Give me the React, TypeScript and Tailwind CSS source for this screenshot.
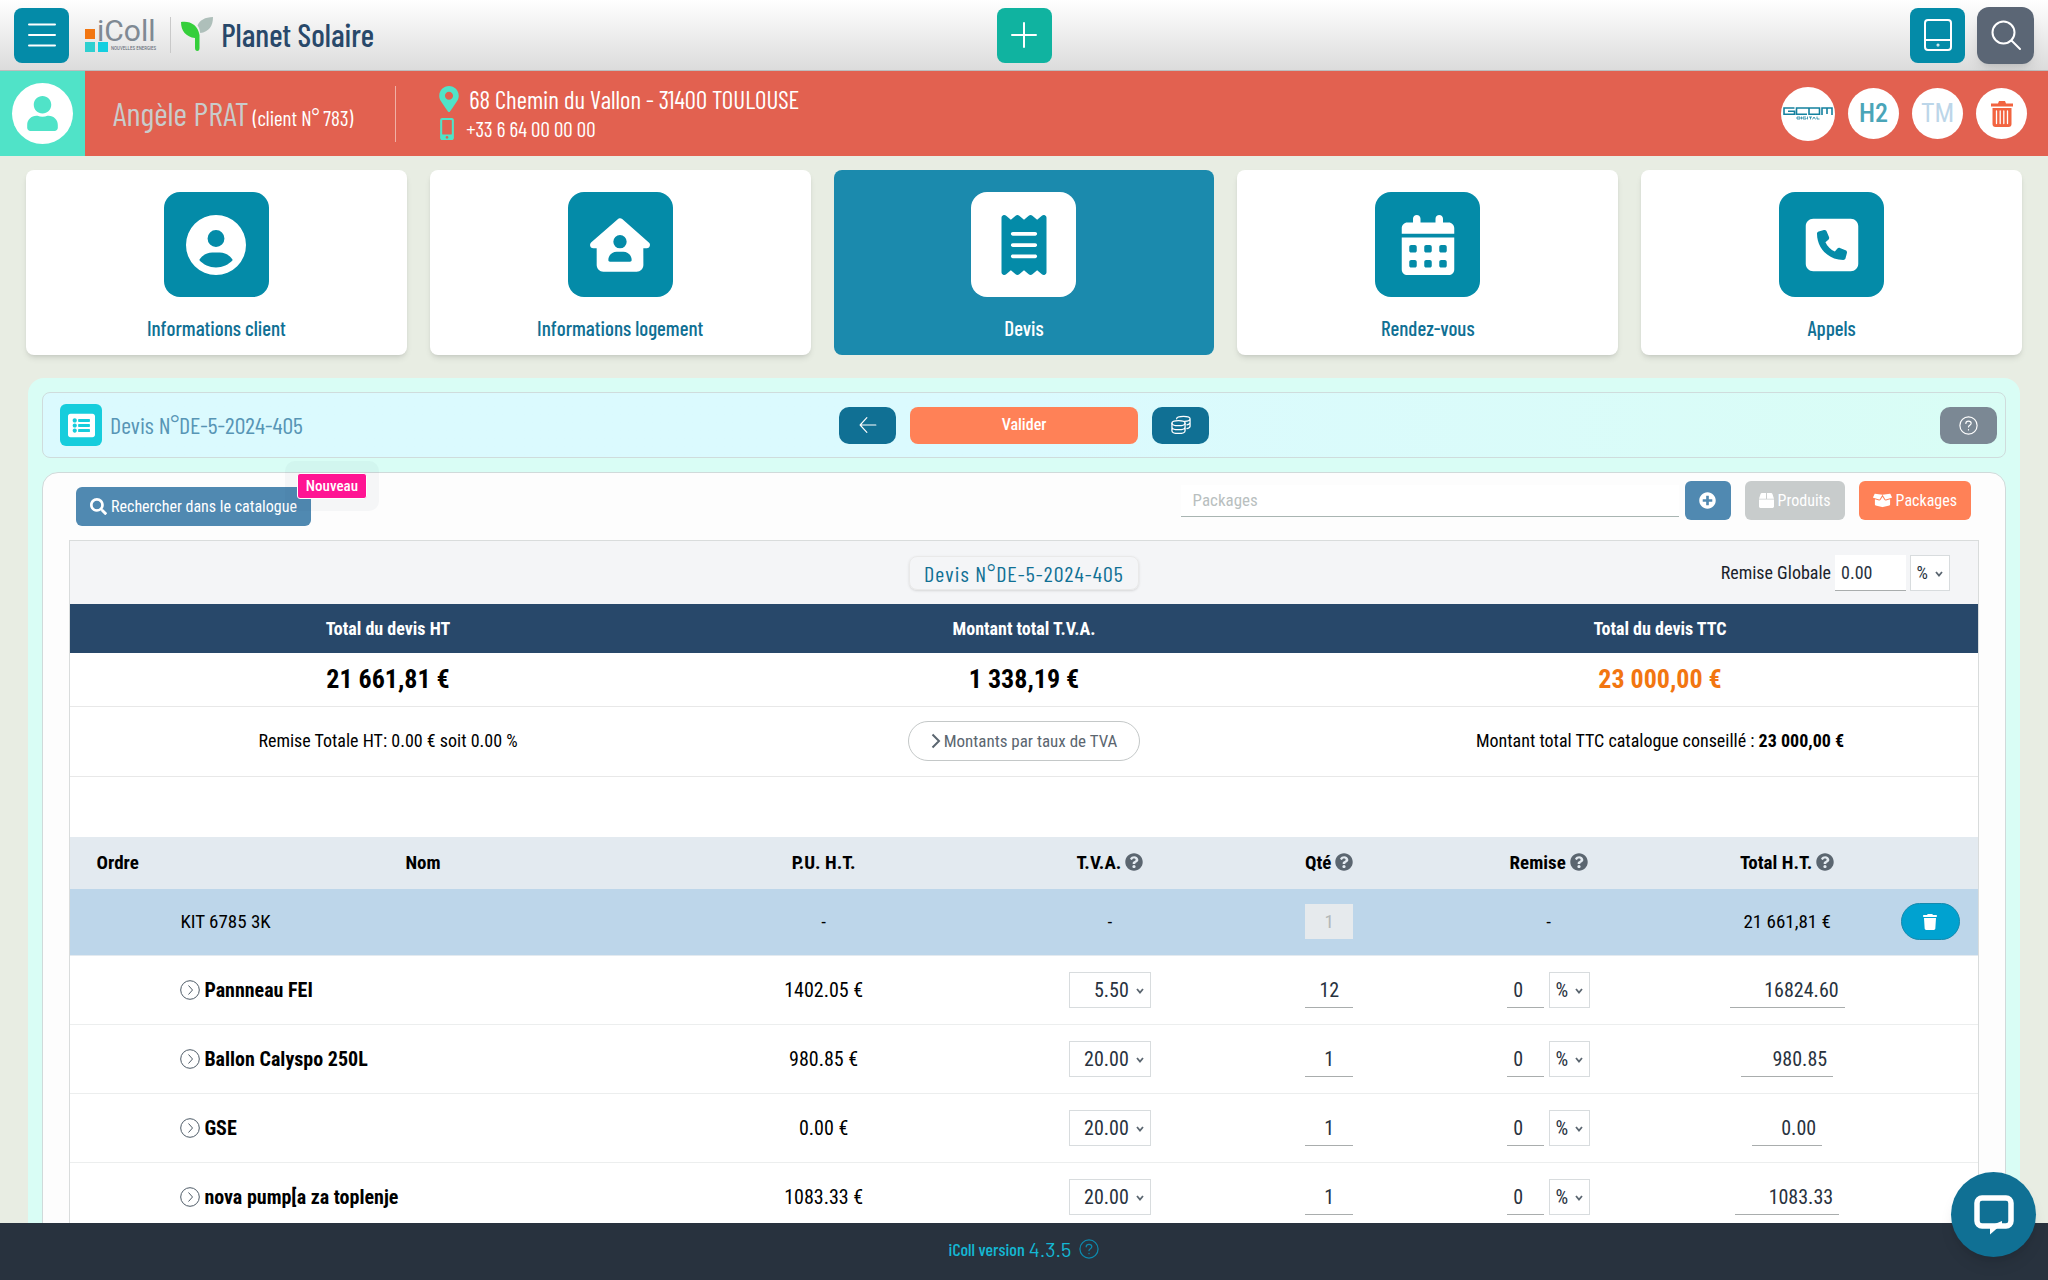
import type React from "react"

import {
  FaBox,
  FaBoxOpen,
  FaListAlt,
  FaMapMarkerAlt,
  FaMobileAlt,
  FaPlusCircle,
  FaQuestionCircle,
  FaSearch,
  FaUser,
} from "react-icons/fa"
import {
  FaCalendarDays,
  FaCircleUser,
  FaHouseUser,
  FaReceipt,
  FaSquarePhone,
  FaTrash,
} from "react-icons/fa6"

const tabs = [
  { name: "Informations client", icon: FaCircleUser, active: false },
  { name: "Informations logement", icon: FaHouseUser, active: false },
  { name: "Devis", icon: FaReceipt, active: true },
  { name: "Rendez-vous", icon: FaCalendarDays, active: false },
  { name: "Appels", icon: FaSquarePhone, active: false },
]

const lines = [
  { name: "Pannneau FEI", price: "1402.05 €", tva: "5.50", qty: "12", discount: "0", total: "16824.60", width: "w-[115px]" },
  { name: "Ballon Calyspo 250L", price: "980.85 €", tva: "20.00", qty: "1", discount: "0", total: "980.85", width: "w-[92px]" },
  { name: "GSE", price: "0.00 €", tva: "20.00", qty: "1", discount: "0", total: "0.00", width: "w-[70px]" },
  { name: "nova pump[a za toplenje", price: "1083.33 €", tva: "20.00", qty: "1", discount: "0", total: "1083.33", width: "w-[104px]" },
]

const columns = [
  { name: "Ordre", width: "w-[5%]", help: false },
  { name: "Nom", width: "w-[27%]", help: false },
  { name: "P.U. H.T.", width: "w-[15%]", help: false },
  { name: "T.V.A.", width: "w-[15%]", help: true },
  { name: "Qté", width: "w-[8%]", help: true },
  { name: "Remise", width: "w-[15%]", help: true },
  { name: "Total H.T.", width: "w-[10%]", help: true },
  { name: "", width: "w-[5%]", help: false },
]

function LineIcon({ className, children }: { className: string; children: React.ReactNode }) {
  return (
    <svg
      viewBox="0 0 32 32"
      fill="none"
      stroke="currentColor"
      strokeWidth="2"
      strokeLinecap="round"
      strokeLinejoin="round"
      className={className}
      aria-hidden="true"
    >
      {children}
    </svg>
  )
}

function CoinsIcon() {
  return (
    <LineIcon className="size-5">
      <ellipse cx="12" cy="13" rx="10.5" ry="4" />
      <path d="M1.5 13v12c0 2.5 4.5 4.5 10.5 4.5s10.5-2 10.5-4.5V13M1.5 19c0 2.5 4.5 4.5 10.5 4.5s10.5-2 10.5-4.5" />
      <path d="M9 6c0-2.5 5-4 11-4s10.5 1.6 10.5 4-4.5 4-9 4M30.5 6v12c0 1.8-2 3-5 3.700M30.5 12c0 1.8-2 3-5 3.700" />
    </LineIcon>
  )
}

function QuestionIcon({ className }: { className: string }) {
  return (
    <LineIcon className={className}>
      <circle cx="16" cy="16" r="14.5" />
      <path d="M11.5 12.5c0-2.5 1.8-4 4.5-4s4.5 1.6 4.5 3.8c0 3.2-4.5 3.2-4.5 6.200M16 23v.4" />
    </LineIcon>
  )
}

// Select with its own small chevron
function Dropdown({
  label,
  value,
  options,
  className,
}: {
  label: string
  value: string
  options: string[]
  className: string
}) {
  return (
    <span className="relative inline-flex align-middle">
      <select
        aria-label={label}
        defaultValue={value}
        className={`h-9 appearance-none border border-[#d8dcde] bg-white pr-[21px] leading-6 text-[#28323e] [text-align-last:right] ${className}`}
      >
        {options.map((option) => (
          <option key={option}>{option}</option>
        ))}
      </select>
      <svg viewBox="0 0 8 6" className="pointer-events-none absolute right-[7px] top-[16px] h-[6px] w-2" aria-hidden="true">
        <path d="M1 1l3 3.500L7 1" fill="none" stroke="#5b6670" strokeWidth="1.800" />
      </svg>
    </span>
  )
}

function Logo() {
  return (
    <a href="#" className="flex items-center gap-[14px]">
      <span className="flex items-end" aria-label="iColl Nouvelles Energies">
        <span className="grid grid-cols-2 gap-[3px]">
          <span className="size-[10px] bg-[#f27611]" />
          <span className="size-[10px]" />
          <span className="size-[10px] bg-[#2fd0d0]" />
          <span className="size-[10px] bg-[#14cfe0]" />
        </span>
        <span className="-ml-[11px] flex flex-col">
          <span className="font-['Roboto','Liberation_Sans',sans-serif] text-[30px] leading-[26px] text-[#7f8993]">iColl</span>
          <span className="pl-[14px] text-[5px] leading-[8px] text-[#5b6670]">NOUVELLES ENERGIES</span>
        </span>
      </span>
      <span className="h-9 w-px bg-[#c9c9c9]" />
      <span className="-ml-1 flex items-center gap-2 pb-[2px]">
        <svg viewBox="0 0 32 34" className="h-[34px] w-8" aria-hidden="true">
          <path fill="#35cf3b" d="M0 5C9 3.500 17 8 18.500 18v13q0 3-2.200 3t-2.300-3V21C5 20 0 14 0 5z" />
          <path fill="#aebfba" d="M32 0C24 0 18.500 3.500 16.500 8.500c1.500 2 2.300 4 2.700 7.500C28 15 32 9 32 0z" />
        </svg>
        <span className="font-['Barlow_Condensed','Roboto_Condensed',sans-serif] text-[32px] font-medium leading-9 text-[#28486a]">
          Planet Solaire
        </span>
      </span>
    </a>
  )
}

function Header() {
  return (
    <header className="grid h-[71px] shrink-0 grid-cols-[1fr_auto_1fr] items-center border-b border-[#bdbdbd] bg-gradient-to-b from-white to-[#dcdcdc] px-[14px]">
      <div className="flex items-center gap-4">
        <button type="button" aria-label="Menu" className="flex size-[55px] items-center justify-center rounded-lg bg-[#048ba8] text-white">
          <LineIcon className="size-8">
            <path d="M3 5.5h26M3 16h26M3 26.5h26" />
          </LineIcon>
        </button>
        <Logo />
      </div>
      <button type="button" aria-label="Ajouter" className="flex size-[55px] items-center justify-center rounded-lg bg-[#10b3a0] text-white">
        <LineIcon className="size-8">
          <path d="M16 4v24M4 16h24" />
        </LineIcon>
      </button>
      <div className="flex items-center justify-end gap-3">
        <button type="button" aria-label="Tablette" className="flex size-[55px] items-center justify-center rounded-lg bg-[#048ba8] text-white">
          <LineIcon className="size-8">
            <rect x="3" y="1" width="26" height="30" rx="3" />
            <path d="M3 21h26" />
            <circle cx="16" cy="26" r="0.5" />
          </LineIcon>
        </button>
        <button
          type="button"
          aria-label="Rechercher"
          className="flex size-[57px] items-center justify-center rounded-xl bg-[#5b6675] text-white shadow-lg"
        >
          <LineIcon className="size-8">
            <circle cx="13.5" cy="13.5" r="11" />
            <path d="M21.5 21.5L30 30" />
          </LineIcon>
        </button>
      </div>
    </header>
  )
}

function ClientBar() {
  return (
    <section className="flex h-[85px] shrink-0 items-center bg-[#e26150] font-['Barlow_Condensed','Roboto_Condensed',sans-serif] text-white">
      <div className="flex size-[85px] items-center justify-center bg-[#50e3c8]">
        <span className="flex size-[61px] items-center justify-center rounded-full bg-white">
          <FaUser className="size-[35px] text-[#50e3c8]" />
        </span>
      </div>
      <h1 className="flex items-baseline gap-1 pl-7 pt-1 text-[#c9cccb]">
        <span className="text-[33px] leading-10">Angèle PRAT</span>
        <span className="text-[21px] leading-10 text-white">(client N° 783)</span>
      </h1>
      <span className="ml-[42px] h-14 w-px bg-[#f0b0a5]" />
      <address className="flex flex-col pb-[2px] pl-[43px] not-italic">
        <span className="flex items-center gap-[10px] text-[25px] leading-8">
          <FaMapMarkerAlt className="h-[26px] w-5 text-[#50e3c8]" />
          68 Chemin du Vallon - 31400 TOULOUSE
        </span>
        <span className="flex items-center gap-[11px] text-[21px] leading-7">
          <FaMobileAlt className="h-[22px] w-4 text-[#50e3c8]" />
          +33 6 64 00 00 00
        </span>
      </address>
      <div className="ml-auto flex items-center gap-[13px] pr-[21px] font-['Roboto_Condensed','Liberation_Sans',sans-serif]">
        <span className="flex size-[54px] flex-col items-center justify-center rounded-full bg-white text-[#14819f]">
          <svg viewBox="0 0 50 13" className="h-[13px] w-[50px]" fill="none" stroke="currentColor" role="img" aria-label="GCOM Digital">
            <path strokeWidth="1.600" d="M11.500 1H1v6.200h10.500V4.200H5M24 1H13.500v6.200H24M26 1v6.200h10.500V1zM13.500 1H36M39 8V1h10v7M44 1v6" />
            <path strokeWidth="0.800" d="M14 10h3v2h-3zM18.500 9.600v2.800M23 10h-3v2h3v-1M24.500 9.600v2.800M26 10h3M27.500 10v2.400M29.500 12.400L31 10l1.500 2.400M34 9.600V12h2.500" />
          </svg>
        </span>
        <button type="button" className="size-[51px] rounded-full bg-white text-[26px] font-medium text-[#4aa5b8]">
          H2
        </button>
        <button type="button" className="size-[51px] rounded-full bg-white text-[26px] text-[#bcd6e9]">
          TM
        </button>
        <button type="button" aria-label="Supprimer le client" className="flex size-[51px] items-center justify-center rounded-full bg-white text-[#f26440]">
          <svg viewBox="0 0 22 26" className="h-[26px] w-[22px]" aria-hidden="true">
            <path fill="currentColor" d="M0 2.500h7L8 0h6l1 2.500h7v3H0z" />
            <path fill="currentColor" d="M1.500 7h19v16a3 3 0 0 1-3 3h-13a3 3 0 0 1-3-3z" />
            <path stroke="#fff" strokeWidth="1.300" strokeLinecap="round" d="M5.500 10v12.500M9.200 10v12.500M12.800 10v12.500M16.500 10v12.500" />
          </svg>
        </button>
      </div>
    </section>
  )
}

function Tabs() {
  return (
    <nav className="grid grid-cols-5 gap-[23px] px-[26px] pt-[14px]">
      {tabs.map((tab) => (
        <a
          key={tab.name}
          href="#"
          className={`flex h-[185px] flex-col items-center gap-[15px] rounded-lg pt-[22px] ${
            tab.active ? "bg-[#1b8aad] text-white" : "bg-white text-[#107094] shadow-md"
          }`}
        >
          <span
            className={`flex size-[105px] items-center justify-center rounded-2xl ${
              tab.active ? "bg-white text-[#048ba8]" : "bg-[#048ba8] text-white"
            }`}
          >
            <tab.icon className="size-[60px]" />
          </span>
          <span className="font-['Barlow_Condensed','Roboto_Condensed',sans-serif] text-[21px] font-medium leading-8">{tab.name}</span>
        </a>
      ))}
    </nav>
  )
}

function Toolbar() {
  return (
    <div className="grid h-[66px] grid-cols-[1fr_auto_1fr] items-center rounded-lg border border-[#cfdcdc] bg-gradient-to-r from-[#dbfafe] via-[#dbfafe] to-[#d9fdf5] px-2">
      <div className="flex items-center gap-2 pl-[9px]">
        <span className="flex size-[42px] items-center justify-center rounded-md bg-[#16cddc]">
          <FaListAlt className="size-[27px] text-white" />
        </span>
        <h2 className="font-['Barlow_Condensed','Roboto_Condensed',sans-serif] text-2xl text-[#5795b5]">Devis N°DE-5-2024-405</h2>
      </div>
      <div className="flex gap-[14px]">
        <button type="button" aria-label="Retour" className="flex h-[37px] w-[57px] items-center justify-center rounded-[10px] bg-[#107094] text-white">
          <LineIcon className="size-[18px]">
            <path d="M30 16H2M14 3L2 16l12 13" />
          </LineIcon>
        </button>
        <button type="button" className="h-[37px] w-[228px] rounded-lg bg-[#ff8157] text-base font-medium text-white">
          Valider
        </button>
        <button type="button" aria-label="Paiements" className="flex h-[37px] w-[57px] items-center justify-center rounded-[10px] bg-[#107094] text-white">
          <CoinsIcon />
        </button>
      </div>
      <div className="flex justify-end">
        <button type="button" aria-label="Aide" className="flex h-[37px] w-[57px] items-center justify-center rounded-[10px] bg-[#7b8894] text-white">
          <QuestionIcon className="size-[19px]" />
        </button>
      </div>
    </div>
  )
}

function CatalogueBar() {
  return (
    <div className="flex items-start justify-between pb-[14px] pl-[33px] pr-[34px] pt-2">
      <div className="relative pt-[6px]">
        <button type="button" className="flex h-[39px] items-center gap-1 rounded-md bg-[#5089b1] px-[14px] text-base text-white">
          <FaSearch className="size-[17px]" />
          Rechercher dans le catalogue
        </button>
        <span className="absolute -right-[56px] -top-2 rounded-[3px] border border-white bg-[#ff1493] px-2 text-[15px] font-medium leading-6 text-white ring-12 ring-[#28486a]/4">
          Nouveau
        </span>
      </div>
      <div className="flex items-center">
        <input
          type="text"
          aria-label="Packages"
          placeholder="Packages"
          className="h-8 w-[498px] border-b border-[#a9b5b2] bg-white px-3 text-[17px] placeholder:text-[#b9bfbf]"
        />
        <button type="button" aria-label="Ajouter un package" className="ml-[6px] flex h-[39px] w-[46px] items-center justify-center rounded-md bg-[#5089b1] text-white">
          <FaPlusCircle className="size-[17px]" />
        </button>
        <button type="button" className="ml-[14px] flex h-[39px] items-center gap-1 rounded-md bg-[#c8cccc] px-[14px] text-base text-white">
          <FaBox className="size-[15px]" />
          Produits
        </button>
        <button type="button" className="ml-[14px] flex h-[39px] items-center gap-1 rounded-md bg-[#ff8157] px-[14px] text-base text-white">
          <FaBoxOpen className="size-[19px]" />
          Packages
        </button>
      </div>
    </div>
  )
}

function Summary() {
  return (
    <>
      <div className="grid h-[63px] grid-cols-[1fr_auto_1fr] items-center bg-[#f4f5f7] px-7">
        <span />
        <h3 className="rounded-lg border border-[#e9e9e9] px-[14px] font-['Barlow_Condensed','Roboto_Condensed',sans-serif] text-[22px] leading-8 tracking-wider text-[#107094] shadow">
          Devis N°DE-5-2024-405
        </h3>
        <div className="flex items-center justify-end gap-1 text-lg">
          <label htmlFor="remise-globale">Remise Globale</label>
          <input
            id="remise-globale"
            defaultValue="0.00"
            className="h-9 w-[71px] border-b border-[#a9adad] bg-white pl-[6px] text-[#28323e]"
          />
          <Dropdown label="Unité de la remise globale" value="%" options={["%", "€"]} className="w-10" />
        </div>
      </div>
      <table className="w-full table-fixed bg-white text-center text-black">
        <thead>
          <tr className="h-[49px] bg-[#28486a] text-lg text-white">
            <th>Total du devis HT</th>
            <th>Montant total T.V.A.</th>
            <th>Total du devis TTC</th>
          </tr>
        </thead>
        <tbody>
          <tr className="h-[53px] border-b border-[#e8e8e8] text-[26px] font-bold">
            <td>21 661,81 €</td>
            <td>1 338,19 €</td>
            <td className="text-[#f27611]">23 000,00 €</td>
          </tr>
          <tr className="h-[70px] border-b border-[#e8e8e8] text-lg">
            <td>Remise Totale HT: 0.00 € soit 0.00 %</td>
            <td>
              <button type="button" className="inline-flex h-10 items-center gap-[3px] rounded-full border border-[#c4c8c8] px-[22px] text-[17px] text-[#5b6670]">
                <svg viewBox="0 0 10 16" className="h-4 w-[10px]" aria-hidden="true">
                  <path d="M1.500 1.500L8 8l-6.500 6.500" fill="none" stroke="currentColor" strokeWidth="2" />
                </svg>
                Montants par taux de TVA
              </button>
            </td>
            <td>
              Montant total TTC catalogue conseillé : <strong>23 000,00 €</strong>
            </td>
          </tr>
        </tbody>
      </table>
    </>
  )
}

function QuoteLines() {
  return (
    <table className="w-full table-fixed bg-white text-center text-[19px] leading-7 text-black">
      <thead>
        <tr className="h-[52px] bg-[#e3eaf0]">
          {columns.map((column) => (
            <th key={column.width + column.name} className={column.width}>
              {column.name}
              {column.help && <FaQuestionCircle className="ml-1 inline size-[18px] align-[-2px] text-[#5b6670]" />}
            </th>
          ))}
        </tr>
      </thead>
      <tbody>
        <tr className="h-[67px] border-b border-[#e3eaf0] bg-[#bdd6ea]">
          <td />
          <td className="pl-[15px] text-left">KIT 6785 3K</td>
          <td>-</td>
          <td>-</td>
          <td>
            <input
              aria-label="Quantité KIT 6785 3K"
              disabled
              defaultValue="1"
              className="h-[35px] w-12 bg-[#e6eaed] text-center align-middle text-[#b3b8b9]"
            />
          </td>
          <td>-</td>
          <td>21 661,81 €</td>
          <td>
            <button
              type="button"
              aria-label="Supprimer KIT 6785 3K"
              className="inline-flex h-[37px] w-[59px] items-center justify-center rounded-full border border-[#1689ad] bg-[#00a2d0] align-middle text-white"
            >
              <FaTrash className="size-4" />
            </button>
          </td>
        </tr>
        {lines.map((line) => (
          <tr key={line.name} className="h-[69px] border-b border-[#eceeee] text-xl">
            <td />
            <td className="pl-[15px] text-left font-bold">
              <span className="flex items-center gap-1">
                <button type="button" aria-label={`Détail ${line.name}`} className="text-[#4d5a66]">
                  <svg viewBox="0 0 20 20" className="size-5" fill="none" stroke="currentColor" aria-hidden="true">
                    <circle cx="10" cy="10" r="9.300" />
                    <path d="M8.500 5.500L12.500 10l-4 4.500" />
                  </svg>
                </button>
                {line.name}
              </span>
            </td>
            <td>{line.price}</td>
            <td>
              <Dropdown label={`T.V.A. ${line.name}`} value={line.tva} options={["5.50", "10.00", "20.00"]} className="w-[82px]" />
            </td>
            <td>
              <input
                aria-label={`Quantité ${line.name}`}
                defaultValue={line.qty}
                className="h-9 w-12 border-b border-[#a9adad] text-center align-middle text-[#28323e]"
              />
            </td>
            <td>
              <span className="flex items-center justify-center gap-[5px]">
                <input
                  aria-label={`Remise ${line.name}`}
                  defaultValue={line.discount}
                  className="h-9 w-[37px] border-b border-[#a9adad] pr-[21px] text-right text-[#28323e]"
                />
                <Dropdown label={`Unité de remise ${line.name}`} value="%" options={["%", "€"]} className="w-[41px]" />
              </span>
            </td>
            <td>
              <input
                aria-label={`Total ${line.name}`}
                defaultValue={line.total}
                className={`h-9 border-b border-[#a9adad] pr-[6px] text-right align-middle text-[#28323e] ${line.width}`}
              />
            </td>
            <td />
          </tr>
        ))}
      </tbody>
    </table>
  )
}

function Footer() {
  return (
    <footer className="flex h-[57px] shrink-0 items-center justify-center bg-[#28323e] pb-[6px]">
      <a
        href="#"
        className="flex items-center gap-1 font-['Barlow_Condensed','Roboto_Condensed',sans-serif] text-lg font-medium text-[#14b8d4]"
      >
        iColl version
        <span className="font-['Barlow','Roboto',sans-serif] text-xl font-normal">4.3.5</span>
        <QuestionIcon className="ml-1 size-5 text-[#0d89ad]" />
      </a>
    </footer>
  )
}

export default function App() {
  return (
    <div className="relative flex h-screen flex-col overflow-hidden bg-[#e8ede3] font-['Roboto_Condensed','Liberation_Sans',sans-serif] text-[#1a222b]">
      <Header />
      <ClientBar />
      <main className="min-h-0 flex-1 overflow-y-auto [scrollbar-width:none]">
        <Tabs />
        <div className="mx-7 mt-[23px] rounded-t-2xl bg-[#d9fdf5] px-[14px] pt-[14px]">
          <Toolbar />
          <div className="mt-[14px] rounded-t-2xl border border-[#d0dada] bg-[#fdfdfd]">
            <CatalogueBar />
            <div className="mx-[26px] border border-[#d9dcdc] bg-white">
              <Summary />
              <div className="h-[60px]" />
              <QuoteLines />
            </div>
          </div>
        </div>
      </main>
      <Footer />
      <button
        type="button"
        aria-label="Chat"
        className="absolute bottom-[23px] right-3 flex size-[85px] items-center justify-center rounded-full bg-[#107094] text-white shadow-lg"
      >
        <svg viewBox="0 0 40 40" className="size-10" aria-hidden="true">
          <path
            d="M8 3h24a5 5 0 0 1 5 5v18a5 5 0 0 1-5 5H8a5 5 0 0 1-5-5V8a5 5 0 0 1 5-5z"
            fill="none"
            stroke="currentColor"
            strokeWidth="5.500"
          />
          <path d="M16 32v7.500L28 29v-3l-12 5z" fill="currentColor" />
        </svg>
      </button>
    </div>
  )
}
